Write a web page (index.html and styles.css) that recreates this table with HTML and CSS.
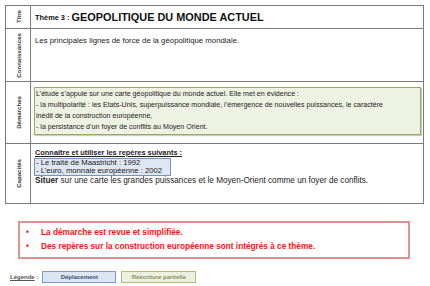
FILE: index.html
```html
<!DOCTYPE html>
<html lang="fr">
<head>
<meta charset="utf-8">
<link rel="stylesheet" href="styles.css">
</head>
<body>
<div class="sheet">
  <div class="grid">
    <div class="label"><span>Titre</span></div>
    <div class="cell title"><span class="small">Thème 3 : </span><span class="big">GEOPOLITIQUE DU MONDE ACTUEL</span></div>
    <div class="label"><span>Connaissances</span></div>
    <div class="cell"><p class="txt know">Les principales lignes de force de la géopolitique mondiale.</p></div>
    <div class="label"><span>Démarches</span></div>
    <div class="cell">
      <div class="greenbox">L’étude s’appuie sur une carte géopolitique du monde actuel. Elle met en évidence :<br>- la multipolarité : les Etats-Unis, superpuissance mondiale, l’émergence de nouvelles puissances, le caractère<br>inédit de la construction européenne,<br>- la persistance d’un foyer de conflits au Moyen Orient.</div>
    </div>
    <div class="label"><span>Capacités</span></div>
    <div class="cell cap">
      <p class="txt head">Connaître et utiliser les repères suivants :</p>
      <div class="bluebox">- Le traité de Maastricht : 1992<br>- L’euro, monnaie européenne : 2002</div>
      <p class="txt situer"><b>Situer</b> sur une carte les grandes puissances et le Moyen-Orient comme un foyer de conflits.</p>
    </div>
  </div>

  <div class="notes">
    <ul>
      <li>La démarche est revue et simplifiée.</li>
      <li>Des repères sur la construction européenne sont intégrés à ce thème.</li>
    </ul>
  </div>

  <div class="legend">
    <span class="legtitle">Légende</span><span class="colon"> :</span>
    <span class="tag blue">Déplacement</span>
    <span class="tag green">Réécriture partielle</span>
  </div>
</div>
</body>
</html>
```

FILE: styles.css
```css
* { box-sizing: border-box; }
html, body { margin: 0; padding: 0; background: #fff; }
body {
  font-family: "Liberation Sans", Arial, sans-serif;
  color: #222;
  width: 430px;
  height: 286px;
  overflow: hidden;
}
.sheet { padding: 5px 0 0 5px; }
.grid {
  width: 419px;
  display: grid;
  grid-template-columns: 25px 1fr;
  grid-template-rows: 23px 53px 62px 60px;
  border-top: 1px solid #7a7a7a;
  border-left: 1px solid #7a7a7a;
}
.label, .cell {
  border-right: 1px solid #7a7a7a;
  border-bottom: 1px solid #7a7a7a;
}
.label {
  display: flex;
  align-items: center;
  justify-content: center;
}
.label span {
  writing-mode: vertical-rl;
  transform: rotate(180deg);
  font-size: 6.1px;
  font-weight: bold;
  color: #333;
}
.cell { padding: 0 2px 0 3px; }
.title {
  display: flex;
  align-items: center;
  padding-left: 4px;
  font-weight: bold;
  color: #111;
}
.title .small { font-size: 7.4px; white-space: pre; }
.title .big { font-size: 10.9px; }
.txt {
  margin: 0;
  font-size: 7.1px;
  line-height: 11px;
  padding-left: 1px;
}
.know { font-size: 7.8px; margin-top: 6px; }
.greenbox {
  margin-top: 5px;
  width: 387px;
  background: #eef2e3;
  border: 1px solid #98a76a;
  box-shadow: 1px 1px 1px #c9cfb5;
  font-size: 7.1px;
  line-height: 11px;
  padding: 1px 2px 1px 1px;
}
.cap { padding-top: 3px; }
.cap .head {
  font-size: 7.4px;
  font-weight: bold;
  text-decoration: underline;
  margin-top: 0;
}
.bluebox {
  width: 137px;
  background: #dde6f1;
  border: 1px solid #7393c2;
  font-size: 7.7px;
  line-height: 8px;
  padding: 0 1px;
}
.situer { font-size: 8.2px; line-height: 10px; }
.notes {
  margin: 17px 0 0 13px;
  width: 392px;
  height: 38px;
  border: 2px solid #de9292;
  display: flex;
  align-items: center;
}
.notes ul {
  margin: 0;
  padding: 0 0 0 6px;
  list-style: none;
  color: #ff1010;
  font-weight: bold;
  font-size: 8.25px;
  line-height: 14px;
}
.notes li { display: flex; }
.notes li::before {
  content: "•";
  width: 15px;
  flex: none;
}
.legend {
  margin: 12px 0 0 5px;
  display: flex;
  align-items: center;
  font-size: 6px;
  font-weight: bold;
  color: #555;
}
.legtitle { text-decoration: underline; }
.colon { white-space: pre; margin-right: 4px; }
.tag {
  height: 12px;
  display: flex;
  align-items: center;
  justify-content: center;
  font-size: 6px;
}
.tag.blue {
  width: 74px;
  background: #dce6f2;
  border: 1px solid #7b9bd0;
  color: #3b4f77;
  margin-right: 5px;
}
.tag.green {
  width: 75px;
  background: #ebf1de;
  border: 1px solid #a9c27a;
  color: #8a8f62;
}
```
